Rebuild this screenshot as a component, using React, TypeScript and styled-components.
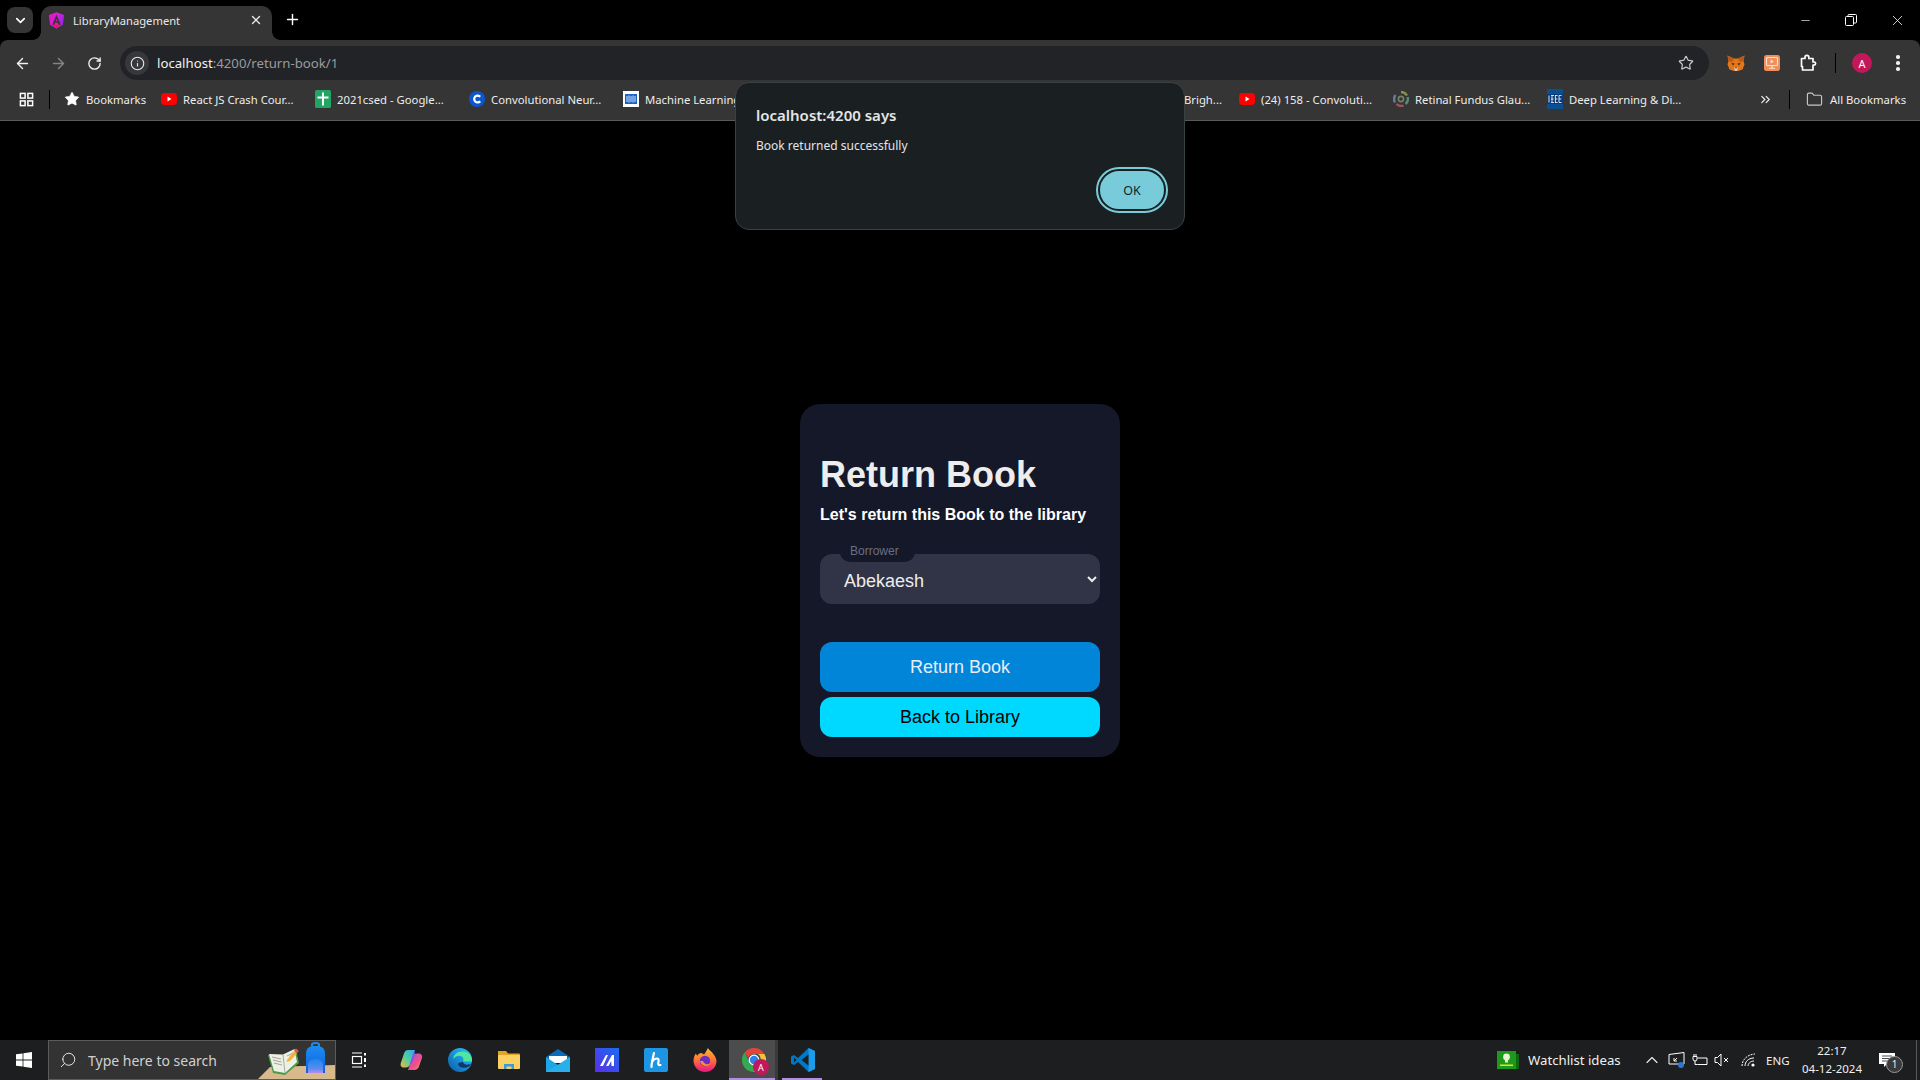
import styled, { createGlobalStyle } from "styled-components";
import {
  ArrowLeft,
  ArrowRight,
  ChevronDown,
  ChevronUp,
  ChevronsRight,
  Folder,
  Info,
  Minus,
  Plus,
  RotateCw,
  Search,
  Star,
  X,
} from "lucide-react";

const UI_FONT = `"Noto Sans", "Open Sans", sans-serif`;

const GlobalStyle = createGlobalStyle`
  html, body {
    margin: 0;
    padding: 0;
    height: 100%;
    background: #000;
    overflow: hidden;
  }
  * {
    box-sizing: border-box;
  }
  #root {
    height: 100vh;
    display: flex;
    flex-direction: column;
    font-family: ${UI_FONT};
  }
`;

/* ---------- small drawn icons ---------- */

const AngularIcon = () => (
  <svg width="17" height="17" viewBox="0 0 24 24">
    <defs>
      <linearGradient id="ng" x1="0" y1="0" x2="1" y2="0.6">
        <stop offset="0" stopColor="#f012c4" />
        <stop offset="0.55" stopColor="#d020d8" />
        <stop offset="1" stopColor="#8a2be2" />
      </linearGradient>
      <linearGradient id="ngb" x1="0" y1="0" x2="0" y2="1">
        <stop offset="0" stopColor="#f0129a" />
        <stop offset="1" stopColor="#e8103c" />
      </linearGradient>
    </defs>
    <path d="M12 .5 22.8 4.3 21 18 12 23.5 3 18 1.2 4.3z" fill="url(#ng)" />
    <path d="M7 16.5h10l1 1.8-6 4.7-6-4.7z" fill="url(#ngb)" />
    <path d="M12 4 6 18h2.8l1.1-2.8h4.2l1.1 2.8H18z" fill="#353535" />
    <path d="M12 9.4 13.3 13h-2.6z" fill="#e41aa8" />
  </svg>
);

const YoutubeIcon = () => (
  <svg width="16" height="16" viewBox="0 0 16 16">
    <rect x="0" y="2" width="16" height="12" rx="3.4" fill="#f00" />
    <path d="M6.5 5.6v4.8L10.500 8z" fill="#fff" />
  </svg>
);

const SheetIcon = () => (
  <svg width="16" height="18" viewBox="0 0 16 18">
    <rect width="16" height="18" rx="1.5" fill="#21a464" />
    <path d="M7 2.5h2v4h4.5v2H9v7H7v-7H2.5v-2H7z" fill="#fff" />
  </svg>
);

const CourseraIcon = () => (
  <svg width="16" height="16" viewBox="0 0 16 16">
    <circle cx="8" cy="8" r="8" fill="#0b57d0" />
    <path d="M11.2 10.2A3.4 3.4 0 1 1 11.2 5.8" fill="none" stroke="#fff" strokeWidth="2.2" />
  </svg>
);

const MlIcon = () => (
  <svg width="16" height="16" viewBox="0 0 16 16">
    <rect width="16" height="16" fill="#fff" />
    <rect x="2" y="3" width="12" height="10" fill="#1c62c4" />
    <path d="M4 5v6M6 4.5v7M8 5v6M10 4.5v7M12 5v6" stroke="#cfe2fb" strokeWidth="1" />
  </svg>
);

const RetinaIcon = () => (
  <svg width="16" height="16" viewBox="0 0 16 16" fill="none" strokeWidth="2.4">
    <path d="M8 1a7 7 0 0 1 6 3.5" stroke="#8a8f4a" />
    <path d="M14.6 6a7 7 0 0 1-2 7" stroke="#5a8a7a" />
    <path d="M10.5 14.6a7 7 0 0 1-7-1.6" stroke="#a0555a" />
    <path d="M2 11.5A7 7 0 0 1 2.5 4" stroke="#6a7a9a" />
    <circle cx="8" cy="8" r="2.6" stroke="#74806a" strokeWidth="1.6" />
  </svg>
);

const IeeeIcon = () => (
  <svg width="16" height="20" viewBox="0 0 16 20">
    <rect width="16" height="20" fill="#0a4f94" />
    <rect y="5" width="16" height="10" fill="#0b3a78" />
    <path d="M2 6.5v7M5 6.5v7M4 6.5H7M4 10H6.6M4 13.5H7M8.4 6.5v7M8 6.5h2.6M8 10h2.4M8 13.5h2.6M12 6.5v7M12 6.5h2.6M12 10h2.3M12 13.5h2.6" stroke="#e8eef5" strokeWidth="0.9" fill="none" />
  </svg>
);

const AppsIcon = () => (
  <svg width="15" height="15" viewBox="0 0 16 16" fill="none" stroke="#fff" strokeWidth="1.6">
    <rect x="1.5" y="1.5" width="5" height="5" />
    <rect x="9.5" y="1.5" width="5" height="5" />
    <rect x="1.5" y="9.5" width="5" height="5" />
    <rect x="9.5" y="9.5" width="5" height="5" />
  </svg>
);

const FoxIcon = () => (
  <svg width="18" height="18" viewBox="0 0 18 18">
    <path d="M.5 1.5 7 4.5h4l6.5-3L16.500 7 17.500 10.500 15.500 15.500 11 17H7L2.500 15.500.5 10.500 1.500 7z" fill="#e2761b" />
    <path d="M.5 1.5 7 4.5 5 8 1.500 7zM17.500 1.500 11 4.500 13 8 16.500 7z" fill="#b85a18" />
    <path d="M4.500 9 7.500 9.500 6 11.500zM13.500 9 10.500 9.500 12 11.500z" fill="#3a2a1c" />
    <path d="M7 13.500h4l-.8 3.500H7.800z" fill="#d9c3b2" />
    <path d="M8 13.500h2l-1 1.200z" fill="#2a2018" />
  </svg>
);

const SlideIcon = () => (
  <svg width="16" height="16" viewBox="0 0 16 16">
    <rect width="16" height="16" rx="2.5" fill="#ee8f5c" />
    <rect x="2.5" y="2.5" width="11" height="8" rx="1" fill="none" stroke="#fbe3d4" strokeWidth="1.1" />
    <path d="M6.6 4.5v4l3.2-2z" fill="#fbe3d4" />
    <path d="M8 10.5v2.5M5 13.2h6" stroke="#fbe3d4" strokeWidth="1.1" />
  </svg>
);

const PuzzleIcon = () => (
  <svg width="18" height="18" viewBox="0 0 18 18" fill="none" stroke="#fff" strokeWidth="1.7" strokeLinejoin="round">
    <path d="M2.5 4.500H6V3.200a1.900 1.900 0 0 1 3.800 0V4.500H14V8h1a1.600 1.600 0 0 1 0 3.200H14V16H3.500V12.500h-1z" />
  </svg>
);

const RestoreIcon = () => (
  <svg width="12" height="12" viewBox="0 0 12 12" fill="none" stroke="#fff" strokeWidth="1">
    <rect x="0.5" y="2.5" width="8" height="9" rx="1" />
    <path d="M3 2.5V1.500a1 1 0 0 1 1-1h6.500a1 1 0 0 1 1 1V8a1 1 0 0 1-1 1H8.500" />
  </svg>
);

const WindowsIcon = () => (
  <svg width="16" height="16" viewBox="0 0 16 16" fill="#fff">
    <path d="M0 2.300 6.600 1.400v6.200H0zM7.400 1.300 16 0v7.600H7.400zM0 8.400h6.600v6.200L0 13.700zM7.400 8.400H16V16l-8.600-1.200z" />
  </svg>
);

const SearchArt = () => (
  <svg width="80" height="40" viewBox="0 0 80 40">
    <defs>
      <linearGradient id="bag" x1="0" y1="0" x2="0" y2="1">
        <stop offset="0" stopColor="#1d8cf0" />
        <stop offset="1" stopColor="#0f5fe0" />
      </linearGradient>
      <linearGradient id="pocket" x1="0" y1="0" x2="0" y2="1">
        <stop offset="0" stopColor="#1f86ee" />
        <stop offset="0.7" stopColor="#5a8cf0" />
        <stop offset="1" stopColor="#c08ae8" />
      </linearGradient>
    </defs>
    <path d="M1 40 14 27 80 25V40z" fill="#d8b98c" />
    <path d="M12 15 17 33 29 35 43 23 40 9 27 15z" fill="#4a9a4c" />
    <path d="M13 14 18 31 29 33 41 22 38.500 9 27 14.500z" fill="#eef0e6" />
    <path d="M27 14.500 29 33" stroke="#a8aca0" strokeWidth="1" />
    <path d="M16 17 25 19M17 20 25.500 22M18 23 26 25M31 16 37 13M32 20 38 16" stroke="#a0a49a" strokeWidth="1" />
    <path d="M31 20 38 11 41 13.500 34 21 30.500 22z" fill="#f4b23a" />
    <path d="M38 10.500 40 8.500 43 11 41 13z" fill="#e4574c" />
    <path d="M50 33V14C50 7.500 54 6 59.500 6S69 7.500 69 14V33z" fill="url(#bag)" />
    <path d="M56 7V4.500C56 3.500 57.500 3 59.500 3S63 3.500 63 4.500V7" fill="none" stroke="#1d8cf0" strokeWidth="2" />
    <path d="M52 33V25C52 21 55.500 19 59.500 19S67 21 67 25V33z" fill="url(#pocket)" />
  </svg>
);

const TaskViewIcon = () => (
  <svg width="16" height="16" viewBox="0 0 16 16" fill="none" stroke="#fff" strokeWidth="1.2">
    <path d="M1 1h10M1 15h10" />
    <rect x="1.5" y="4.5" width="9" height="7" />
    <path d="M14 1v2.500M14 6v4M14 12.500V15" strokeWidth="2" />
  </svg>
);

const CopilotIcon = () => (
  <svg width="24" height="24" viewBox="0 0 24 24">
    <defs>
      <linearGradient id="cpa" x1="0" y1="0" x2="1" y2="1">
        <stop offset="0" stopColor="#3fb8f0" />
        <stop offset="0.5" stopColor="#7c5bf0" />
        <stop offset="1" stopColor="#2a3ce0" />
      </linearGradient>
      <linearGradient id="cpb" x1="0" y1="1" x2="1" y2="0">
        <stop offset="0" stopColor="#f6b73c" />
        <stop offset="0.5" stopColor="#4ad0a0" />
        <stop offset="1" stopColor="#3fa0f0" />
      </linearGradient>
      <linearGradient id="cpc" x1="0" y1="0" x2="1" y2="1">
        <stop offset="0" stopColor="#a04fe0" />
        <stop offset="0.6" stopColor="#f0508a" />
        <stop offset="1" stopColor="#f6a03c" />
      </linearGradient>
    </defs>
    <path d="M9 2h7l-5 14.500c-.6 2-2.200 3-4 3H4.500C2 19.500 1 17 2 14.500L5 5.500C5.700 3.300 7 2 9 2z" fill="url(#cpb)" />
    <path d="M15 22H9l4.500-13c.8-2 2-3.500 4-3.500h2.500c2.600 0 3.600 2.500 3 4.500l-3 8.500C19.300 20.800 17.500 22 15 22z" fill="url(#cpc)" />
    <path d="M15 3 11 15c-.3 1 .6 1.500 1.300.5L16 6z" fill="url(#cpa)" />
  </svg>
);

const EdgeIcon = () => (
  <svg width="24" height="24" viewBox="0 0 24 24">
    <defs>
      <linearGradient id="edg" x1="0" y1="1" x2="1" y2="0">
        <stop offset="0" stopColor="#0c59a4" />
        <stop offset="0.6" stopColor="#1b9de2" />
        <stop offset="1" stopColor="#35c1f1" />
      </linearGradient>
    </defs>
    <circle cx="12" cy="12" r="12" fill="url(#edg)" />
    <path d="M24 12c0-6-5-8.500-9.500-8.500C8 3.500 5 8 5.500 11c2-3 5-3.500 7-3 3 .7 3.500 3.500 2.500 5.500H24z" fill="#50e6a0" />
    <path d="M15 13.500c-1.500 1.500-5 .5-5 2.500 0 3 6 5.500 11 2.500.7-.5 1.500-1.500 2-3-2 1.500-5 1.500-6.500.5-1-.7-1.500-1.500-1.500-2.500z" fill="#0d3a6e" />
  </svg>
);

const ExplorerIcon = () => (
  <svg width="24" height="24" viewBox="0 0 24 24">
    <path d="M1 3h8l2 2.500h11a1 1 0 0 1 1 1V8H1z" fill="#e0a526" />
    <rect x="1" y="7" width="22" height="14" rx="1" fill="#fbd262" />
    <path d="M7 21v-5h10v5h-2.500v-2.500h-5V21z" fill="#3a9bd8" />
  </svg>
);

const MailIcon = () => (
  <svg width="24" height="24" viewBox="0 0 24 24">
    <path d="M0 9 12 1l12 8v3H0z" fill="#0a6cb8" />
    <path d="M3 8h18v7H3z" fill="#fff" />
    <path d="M0 9l12 8 12-8v15H0z" fill="#1fa4e4" />
    <path d="M0 24 24 9v15z" fill="#31b8ec" opacity="0.6" />
  </svg>
);

const ArcIcon = () => (
  <svg width="24" height="24" viewBox="0 0 24 24">
    <defs>
      <linearGradient id="arc" x1="0" y1="1" x2="1" y2="0">
        <stop offset="0" stopColor="#5a2ee8" />
        <stop offset="1" stopColor="#1b6cf0" />
      </linearGradient>
    </defs>
    <rect width="24" height="24" fill="url(#arc)" />
    <path d="M5 18 11 7h2L8 18zM11 18l6-11h2v11h-2.500l-.3-5L13.500 18z" fill="#fff" />
  </svg>
);

const HIcon = () => (
  <svg width="24" height="24" viewBox="0 0 24 24">
    <rect width="24" height="24" rx="2" fill="#1d95e2" />
    <path d="M10 5c-1 4-2.500 10-2.500 14M8 14c1-2 3-3.500 5-3.500 2 0 1.800 2 1.300 4-.3 1.300 0 3 2.200 2.500" fill="none" stroke="#fff" strokeWidth="2.2" strokeLinecap="round" />
  </svg>
);

const FirefoxIcon = () => (
  <svg width="24" height="24" viewBox="0 0 24 24">
    <defs>
      <linearGradient id="ff" x1="0.5" y1="0" x2="0.5" y2="1">
        <stop offset="0" stopColor="#ffbd2e" />
        <stop offset="0.5" stopColor="#ff7139" />
        <stop offset="1" stopColor="#e31587" />
      </linearGradient>
    </defs>
    <path d="M12 24C5 24 .5 18.500 .5 12.500.5 9.500 2 6.500 3 5.500c.2 1 .7 1.800 1.300 2.300C5.300 6 7 5 8 5c1 0 2 1 3 1.500C12.500 4.500 14 2 15 0c.6 2 3 3 5 5.500 2.500 3 3.500 5.500 3.500 7.500C23.500 19 19 24 12 24z" fill="url(#ff)" />
    <circle cx="12" cy="13" r="5.2" fill="#6a2ec0" />
    <path d="M7 13c1 3.500 3 5 6 5 2.500 0 4-1.500 4.500-3-1 1-3 1.500-4.500 1-1.500-.5-2.500-1.500-3-3z" fill="#ff8a3a" />
  </svg>
);

const ChromeIcon = () => (
  <svg width="24" height="24" viewBox="0 0 24 24">
    <path d="M12 0a12 12 0 0 1 10.400 6H12a6 6 0 0 0-5.700 4L2.600 4.500A12 12 0 0 1 12 0z" fill="#e0453a" />
    <path d="M22.400 6A12 12 0 0 1 12 24l5.200-9A6 6 0 0 0 16 6z" fill="#f5c33b" />
    <path d="M12 24A12 12 0 0 1 2.600 4.500L7.800 15a6 6 0 0 0 5.500 2.800z" fill="#34a853" />
    <circle cx="12" cy="12" r="4.8" fill="#2f7ff0" stroke="#fff" strokeWidth="1.2" />
  </svg>
);

const VsCodeIcon = () => (
  <svg width="24" height="24" viewBox="0 0 24 24">
    <path d="M17.500 0 24 3v18l-6.500 3L7 14l-4 3-3-1.500v-7L3 7l4 3z" fill="#0078c8" />
    <path d="M17.500 0 24 3v18l-6.500 3z" fill="#1f9ce8" />
    <path d="M17.500 6.500 10.500 12l7 5.500z" fill="#1c1e1f" />
    <path d="M3 9.500V14.500L5.500 12z" fill="#1c1e1f" />
  </svg>
);

const WatchlistIcon = () => (
  <svg width="22" height="18" viewBox="0 0 22 18">
    <rect x="0" y="0" width="19" height="18" fill="#1d9a1d" />
    <rect x="19" y="3" width="3" height="15" fill="#0e6a12" />
    <circle cx="9.5" cy="6" r="3.4" fill="#e8f5d0" />
    <rect x="8" y="9" width="3" height="2.5" fill="#e8f5d0" />
    <rect x="3" y="13.5" width="13" height="1.5" fill="#e4e21e" />
  </svg>
);

const ScreenTrayIcon = () => (
  <svg width="18" height="18" viewBox="0 0 18 18" fill="none" stroke="#fff" strokeWidth="1">
    <path d="M1 3.500 16 1.500V13H1z" />
    <path d="M6 10l3-3M6 7v3h3" />
    <circle cx="13" cy="14" r="3" fill="#2b78d4" stroke="none" />
  </svg>
);

const BatteryTrayIcon = () => (
  <svg width="16" height="16" viewBox="0 0 16 16" fill="none" stroke="#fff" strokeWidth="1">
    <path d="M5.500 6H15v6.500H5.500" />
    <path d="M2 2v2.500M4 2v2.500M1 4.500h4V7a2 2 0 0 1-4 0zM3 9v3.500h2.500" />
  </svg>
);

const VolumeTrayIcon = () => (
  <svg width="16" height="16" viewBox="0 0 16 16" fill="none" stroke="#fff" strokeWidth="1">
    <path d="M1 5.500h2.500L7 2v12L3.500 10.500H1z" />
    <path d="M10 6l4 4M14 6l-4 4" />
  </svg>
);

const WifiTrayIcon = () => (
  <svg width="16" height="16" viewBox="0 0 16 16" fill="none" stroke="#fff" strokeWidth="1">
    <path d="M1 14C1 8 6 2.500 14 2" strokeDasharray="2 1" />
    <path d="M4 14c0-4 3-8 9-8" />
    <path d="M7 14c0-2 2-5 6-5" />
    <circle cx="12" cy="13" r="1.6" fill="#fff" stroke="none" />
  </svg>
);

const NotificationIcon = () => (
  <svg width="16" height="15" viewBox="0 0 16 15">
    <path d="M0 0h16v11H8l-3 3v-3H0z" fill="#fff" />
    <path d="M3 3h10M3 5.500h10M3 8h10" stroke="#1c1e1f" strokeWidth="0.8" />
  </svg>
);

/* ---------- data ---------- */

interface Bookmark {
  icon?: React.ReactNode;
  label: string;
  width: number;
}

const leftBookmarks: Bookmark[] = [
  { icon: <Star size={16} fill="#fff" color="#fff" strokeWidth={1} />, label: "Bookmarks", width: 59 },
  { icon: <YoutubeIcon />, label: "React JS Crash Cour...", width: 116 },
  { icon: <SheetIcon />, label: "2021csed - Google...", width: 116 },
  { icon: <CourseraIcon />, label: "Convolutional Neur...", width: 116 },
  { icon: <MlIcon />, label: "Machine Learning Sp...", width: 116 },
];

const rightBookmarks: Bookmark[] = [
  { icon: <YoutubeIcon />, label: "(24) 158 - Convoluti...", width: 116 },
  { icon: <RetinaIcon />, label: "Retinal Fundus Glau...", width: 116 },
  { icon: <IeeeIcon />, label: "Deep Learning & Di...", width: 116 },
];

export default function App() {
  return (
    <>
      <GlobalStyle />
      <TabStrip>
        <TabSearch>
          <ChevronDown size={15} color="#fff" strokeWidth={2.6} />
        </TabSearch>
        <Tab>
          <AngularIcon />
          <TabTitle>LibraryManagement</TabTitle>
          <X size={14} color="#e8e8e8" strokeWidth={2.2} />
        </Tab>
        <NewTab>
          <Plus size={17} color="#fff" strokeWidth={2} />
        </NewTab>
        <WindowControls>
          <WindowButton>
            <Minus size={13} color="#fff" strokeWidth={1.2} />
          </WindowButton>
          <WindowButton>
            <RestoreIcon />
          </WindowButton>
          <WindowButton>
            <X size={17} color="#fff" strokeWidth={1.1} />
          </WindowButton>
        </WindowControls>
      </TabStrip>

      <Toolbar>
        <NavButton>
          <ArrowLeft size={17} color="#f0f0f0" strokeWidth={2} />
        </NavButton>
        <NavButton>
          <ArrowRight size={17} color="#858585" strokeWidth={2} />
        </NavButton>
        <NavButton>
          <RotateCw size={15} color="#f0f0f0" strokeWidth={2.2} />
        </NavButton>
        <Omnibox>
          <SiteInfo>
            <Info size={15} color="#e8e8e8" strokeWidth={1.8} />
          </SiteInfo>
          <Url>
            <UrlHost>localhost</UrlHost>:4200/return-book/1
          </Url>
          <Star size={16} color="#c8c8c8" strokeWidth={1.8} />
        </Omnibox>
        <ToolbarActions>
          <FoxIcon />
          <SlideIcon />
          <PuzzleIcon />
          <ToolbarDivider />
          <Avatar>A</Avatar>
          <MenuDots>
            <i />
            <i />
            <i />
          </MenuDots>
        </ToolbarActions>
      </Toolbar>

      <BookmarksBar>
        <BookmarkGroup>
          <AppsButton>
            <AppsIcon />
          </AppsButton>
          <BarDivider />
          {leftBookmarks.map((b, i) => (
            <BookmarkItem key={b.label} $first={i === 0}>
              {b.icon}
              <BookmarkLabel $width={b.width}>{b.label}</BookmarkLabel>
            </BookmarkItem>
          ))}
        </BookmarkGroup>
        <BookmarkGroup>
          <BookmarkItem>
            <BookmarkLabel $width={39}>Brigh...</BookmarkLabel>
          </BookmarkItem>
          {rightBookmarks.map((b) => (
            <BookmarkItem key={b.label}>
              {b.icon}
              <BookmarkLabel $width={b.width}>{b.label}</BookmarkLabel>
            </BookmarkItem>
          ))}
          <OverflowButton>
            <ChevronsRight size={15} color="#e8e8e8" strokeWidth={2} />
          </OverflowButton>
          <BarDivider />
          <AllBookmarks>
            <Folder size={17} color="#c8c8c8" strokeWidth={1.6} />
            <BookmarkLabel $width={76}>All Bookmarks</BookmarkLabel>
          </AllBookmarks>
        </BookmarkGroup>
      </BookmarksBar>

      <Main>
        <Card>
          <Title>Return Book</Title>
          <Subtitle>Let's return this Book to the library</Subtitle>
          <SelectField>
            <FieldLabel>Borrower</FieldLabel>
            <BorrowerSelect defaultValue="Abekaesh">
              <option>Abekaesh</option>
            </BorrowerSelect>
          </SelectField>
          <PrimaryButton>Return Book</PrimaryButton>
          <SecondaryButton>Back to Library</SecondaryButton>
        </Card>
      </Main>

      <AlertDialog>
        <AlertTitle>localhost:4200 says</AlertTitle>
        <AlertMessage>Book returned successfully</AlertMessage>
        <AlertActions>
          <OkButton>OK</OkButton>
        </AlertActions>
      </AlertDialog>

      <Taskbar>
        <StartButton>
          <WindowsIcon />
        </StartButton>
        <SearchBox>
          <MirroredSearch size={18} color="#e8e8e8" strokeWidth={1.3} />
          <SearchText>Type here to search</SearchText>
          <SearchArtSlot>
            <SearchArt />
          </SearchArtSlot>
        </SearchBox>
        <TaskViewSlot>
          <TaskViewIcon />
        </TaskViewSlot>
        <TaskSlot><CopilotIcon /></TaskSlot>
        <TaskSlot><EdgeIcon /></TaskSlot>
        <TaskSlot><ExplorerIcon /></TaskSlot>
        <TaskSlot><MailIcon /></TaskSlot>
        <TaskSlot><ArcIcon /></TaskSlot>
        <TaskSlot><HIcon /></TaskSlot>
        <TaskSlot><FirefoxIcon /></TaskSlot>
        <TaskSlot $active $running>
          <ChromeIcon />
          <ChromeBadge>A</ChromeBadge>
        </TaskSlot>
        <TaskSlot $running><VsCodeIcon /></TaskSlot>

        <Tray>
          <WatchlistIcon />
          <WatchlistText>Watchlist ideas</WatchlistText>
          <TrayIcons>
            <ChevronUp size={20} color="#e8e8e8" strokeWidth={1.4} />
            <ScreenTrayIcon />
            <BatteryTrayIcon />
            <VolumeTrayIcon />
            <WifiSlot>
              <WifiTrayIcon />
            </WifiSlot>
          </TrayIcons>
          <TrayLang>ENG</TrayLang>
          <Clock>
            <span>22:17</span>
            <span>04-12-2024</span>
          </Clock>
          <NotificationSlot>
            <NotificationIcon />
            <NotificationCount>1</NotificationCount>
          </NotificationSlot>
          <ShowDesktop />
        </Tray>
      </Taskbar>
    </>
  );
}

/* ---------- browser chrome ---------- */

const TabStrip = styled.div`
  height: 40px;
  flex: none;
  display: flex;
  align-items: flex-end;
  padding-left: 7px;
  background: #000;
`;

const TabSearch = styled.div`
  width: 26px;
  height: 26px;
  margin-bottom: 7px;
  border-radius: 8px;
  background: #353535;
  display: flex;
  align-items: center;
  justify-content: center;
`;

const Tab = styled.div`
  position: relative;
  width: 231px;
  height: 34px;
  margin-left: 8px;
  padding: 0 9px 6px 7px;
  background: #353535;
  border-radius: 10px 10px 0 0;
  display: flex;
  align-items: center;
  gap: 8px;

  &::before,
  &::after {
    content: "";
    position: absolute;
    bottom: 0;
    width: 8px;
    height: 8px;
    background: radial-gradient(circle at 0 0, #000 7.5px, #353535 8px);
  }
  &::before {
    left: -8px;
  }
  &::after {
    right: -8px;
    background: radial-gradient(circle at 100% 0, #000 7.5px, #353535 8px);
  }
`;

const TabTitle = styled.span`
  flex: 1;
  font-size: 11.2px;
  color: #e8e8e8;
  white-space: nowrap;
`;

const NewTab = styled.div`
  width: 26px;
  height: 26px;
  margin: 0 0 8px 7px;
  display: flex;
  align-items: center;
  justify-content: center;
`;

const WindowControls = styled.div`
  margin-left: auto;
  align-self: flex-start;
  display: flex;
`;

const WindowButton = styled.div`
  width: 46px;
  height: 40px;
  display: flex;
  align-items: center;
  justify-content: center;
`;

const Toolbar = styled.div`
  height: 40px;
  flex: none;
  display: flex;
  align-items: flex-end;
  padding-left: 4px;
  background: #353535;
  border-radius: 8px 8px 0 0;
`;

const NavButton = styled.div`
  width: 36px;
  height: 34px;
  display: flex;
  align-items: center;
  justify-content: center;
`;

const Omnibox = styled.div`
  width: 1589px;
  height: 34px;
  margin-left: 8px;
  padding: 0 15px 0 5px;
  background: #222327;
  border-radius: 17px;
  display: flex;
  align-items: center;
`;

const SiteInfo = styled.div`
  width: 24px;
  height: 24px;
  border-radius: 50%;
  background: #37383c;
  display: flex;
  align-items: center;
  justify-content: center;
`;

const Url = styled.div`
  flex: 1;
  margin-left: 8px;
  font-size: 13.2px;
  color: #9a9b9d;
`;

const UrlHost = styled.span`
  color: #f2f2f2;
`;

const ToolbarActions = styled.div`
  flex: 1;
  height: 34px;
  padding-left: 18px;
  display: flex;
  align-items: center;
  gap: 19px;
`;

const ToolbarDivider = styled.div`
  width: 1px;
  height: 20px;
  margin: 0 -3px 0 -1px;
  background: #000;
`;

const Avatar = styled.div`
  width: 20px;
  height: 20px;
  border-radius: 50%;
  background: #c2185b;
  color: #fff;
  font-size: 11px;
  display: flex;
  align-items: center;
  justify-content: center;
`;

const MenuDots = styled.div`
  margin-left: 5px;
  display: flex;
  flex-direction: column;
  gap: 2.5px;

  i {
    width: 3.5px;
    height: 3.5px;
    border-radius: 50%;
    background: #f0f0f0;
  }
`;

const BookmarksBar = styled.div`
  height: 41px;
  flex: none;
  display: flex;
  align-items: center;
  justify-content: space-between;
  padding: 0 14px 2px 0;
  background: #353535;
  border-bottom: 1px solid #5a5a5a;
`;

const BookmarkGroup = styled.div`
  display: flex;
  align-items: center;
`;

const AppsButton = styled.div`
  width: 49px;
  padding-left: 3px;
  display: flex;
  justify-content: center;
`;

const BarDivider = styled.div`
  width: 1px;
  height: 19px;
  background: #000;
`;

const BookmarkItem = styled.div<{ $first?: boolean }>`
  display: flex;
  align-items: center;
  gap: 6px;
  margin-left: ${(p) => (p.$first ? "14px" : "16px")};
  color: #f0f0f0;
`;

const BookmarkLabel = styled.span<{ $width: number }>`
  width: ${(p) => p.$width}px;
  font-size: 11.3px;
  white-space: nowrap;
  color: #ededed;
`;

const OverflowButton = styled.div`
  width: 16px;
  margin: 0 16px 0 72px;
  display: flex;
  justify-content: center;
`;

const AllBookmarks = styled.div`
  display: flex;
  align-items: center;
  gap: 7px;
  margin-left: 16px;
`;

/* ---------- page ---------- */

const Main = styled.main`
  flex: 1;
  display: flex;
  align-items: center;
  justify-content: center;
  background: #000;
  font-family: "Liberation Sans", Arial, sans-serif;
`;

const Card = styled.div`
  width: 320px;
  padding: 50px 20px 20px;
  background: #141829;
  border-radius: 20px;
  display: flex;
  flex-direction: column;
`;

const Title = styled.h1`
  margin: 0;
  font-size: 36px;
  line-height: 41px;
  font-weight: 700;
  color: #ededed;
`;

const Subtitle = styled.h2`
  margin: 11px 0 0;
  font-size: 16px;
  line-height: 18px;
  font-weight: 700;
  color: #fff;
  white-space: nowrap;
`;

const SelectField = styled.div`
  position: relative;
  margin: 30px 0 38px;
`;

const FieldLabel = styled.span`
  position: absolute;
  top: -10px;
  left: 20px;
  width: 75px;
  height: 18px;
  padding-left: 10px;
  background: #141829;
  border-radius: 0 0 10px 10px;
  font-size: 12px;
  line-height: 14px;
  color: #6d6e82;
`;

const BorrowerSelect = styled.select`
  display: block;
  width: 100%;
  height: 50px;
  padding: 4px 2px 0 20px;
  border: none;
  border-radius: 12px;
  background-color: #303446;
  color: #ededed;
  color-scheme: dark;
  font-family: "Liberation Sans", Arial, sans-serif;
  font-size: 18px;
  outline: none;
`;

const PrimaryButton = styled.button`
  height: 50px;
  border: none;
  border-radius: 12px;
  background: #0085d9;
  color: #e8eef5;
  font-family: "Liberation Sans", Arial, sans-serif;
  font-size: 18px;
`;

const SecondaryButton = styled.button`
  height: 40px;
  margin-top: 5px;
  border: none;
  border-radius: 12px;
  background: #00d9ff;
  color: #000;
  font-family: "Liberation Sans", Arial, sans-serif;
  font-size: 18px;
`;

/* ---------- alert ---------- */

const AlertDialog = styled.div`
  position: absolute;
  top: 82px;
  left: 735px;
  width: 450px;
  height: 148px;
  padding: 20px;
  background: #1a1f21;
  border: 1px solid #3a4144;
  border-radius: 14px;
  color: #e3e5e6;
`;

const AlertTitle = styled.div`
  font-size: 15px;
  line-height: 24px;
  font-weight: 600;
`;

const AlertMessage = styled.div`
  margin-top: 10px;
  font-size: 12px;
  line-height: 18px;
`;

const AlertActions = styled.div`
  position: absolute;
  right: 18px;
  bottom: 18px;
`;

const OkButton = styled.button`
  width: 68px;
  height: 42px;
  border: 2px solid #1a1f21;
  border-radius: 21px;
  background: #78cbd9;
  outline: 2px solid #78cbd9;
  color: #10262c;
  font-family: ${UI_FONT};
  font-size: 12.5px;
  font-weight: 400;
`;

/* ---------- taskbar ---------- */

const Taskbar = styled.footer`
  height: 40px;
  flex: none;
  display: flex;
  background: #1c1e1f;
  color: #fff;
`;

const StartButton = styled.div`
  width: 48px;
  display: flex;
  align-items: center;
  justify-content: center;
`;

const SearchBox = styled.div`
  position: relative;
  width: 288px;
  padding-left: 10px;
  background: #333;
  border: 1px solid #5c5c5c;
  display: flex;
  align-items: center;
  overflow: hidden;
`;

const MirroredSearch = styled(Search)`
  transform: scaleX(-1);
`;

const SearchText = styled.span`
  margin-left: 11px;
  font-size: 14px;
  color: #d0d0d0;
`;

const SearchArtSlot = styled.div`
  position: absolute;
  right: -1px;
  bottom: -1px;
  height: 40px;
`;

const TaskViewSlot = styled.div`
  width: 50px;
  padding-right: 4px;
  display: flex;
  align-items: center;
  justify-content: center;
`;

const TaskSlot = styled.div<{ $active?: boolean; $running?: boolean }>`
  position: relative;
  width: 49px;
  display: flex;
  align-items: center;
  justify-content: center;
  background: ${(p) =>
    p.$active
      ? "linear-gradient(to right, #4c4c4c 46px, #3a3a3a 46px)"
      : "transparent"};

  ${(p) =>
    p.$running &&
    `
    &::after {
      content: "";
      position: absolute;
      left: ${p.$active ? "0" : "4px"};
      right: ${p.$active ? "3px" : "5px"};
      bottom: 0;
      height: 2px;
      background: #b08fe0;
    }
  `}
`;

const ChromeBadge = styled.span`
  position: absolute;
  left: 24px;
  bottom: 5px;
  width: 16px;
  height: 16px;
  border-radius: 50%;
  background: #c2185b;
  color: #fff;
  font-size: 9px;
  display: flex;
  align-items: center;
  justify-content: center;
`;

const Tray = styled.div`
  margin-left: auto;
  display: flex;
  align-items: center;
  color: #f0f0f0;
`;

const WatchlistText = styled.span`
  width: 92px;
  margin-left: 9px;
  font-size: 13.2px;
  white-space: nowrap;
`;

const TrayIcons = styled.div`
  margin-left: 22px;
  display: flex;
  align-items: center;
  gap: 6px;
`;

const WifiSlot = styled.div`
  margin-left: 5px;
  display: flex;
`;

const TrayLang = styled.span`
  width: 24px;
  margin-left: 9px;
  font-size: 11.5px;
`;

const Clock = styled.div`
  width: 62px;
  margin-left: 11px;
  display: flex;
  flex-direction: column;
  align-items: center;
  font-size: 11.5px;
  line-height: 18px;
`;

const NotificationSlot = styled.div`
  position: relative;
  width: 37px;
  margin-left: 16px;
  display: flex;
`;

const NotificationCount = styled.span`
  position: absolute;
  left: 7px;
  top: 3px;
  width: 17px;
  height: 17px;
  border-radius: 50%;
  border: 1px solid #9a9a9a;
  background: #3a3a3a;
  font-size: 10px;
  display: flex;
  align-items: center;
  justify-content: center;
`;

const ShowDesktop = styled.div`
  width: 1px;
  height: 40px;
  margin: 0 3px 0 0;
  background: #5a5a5a;
`;
